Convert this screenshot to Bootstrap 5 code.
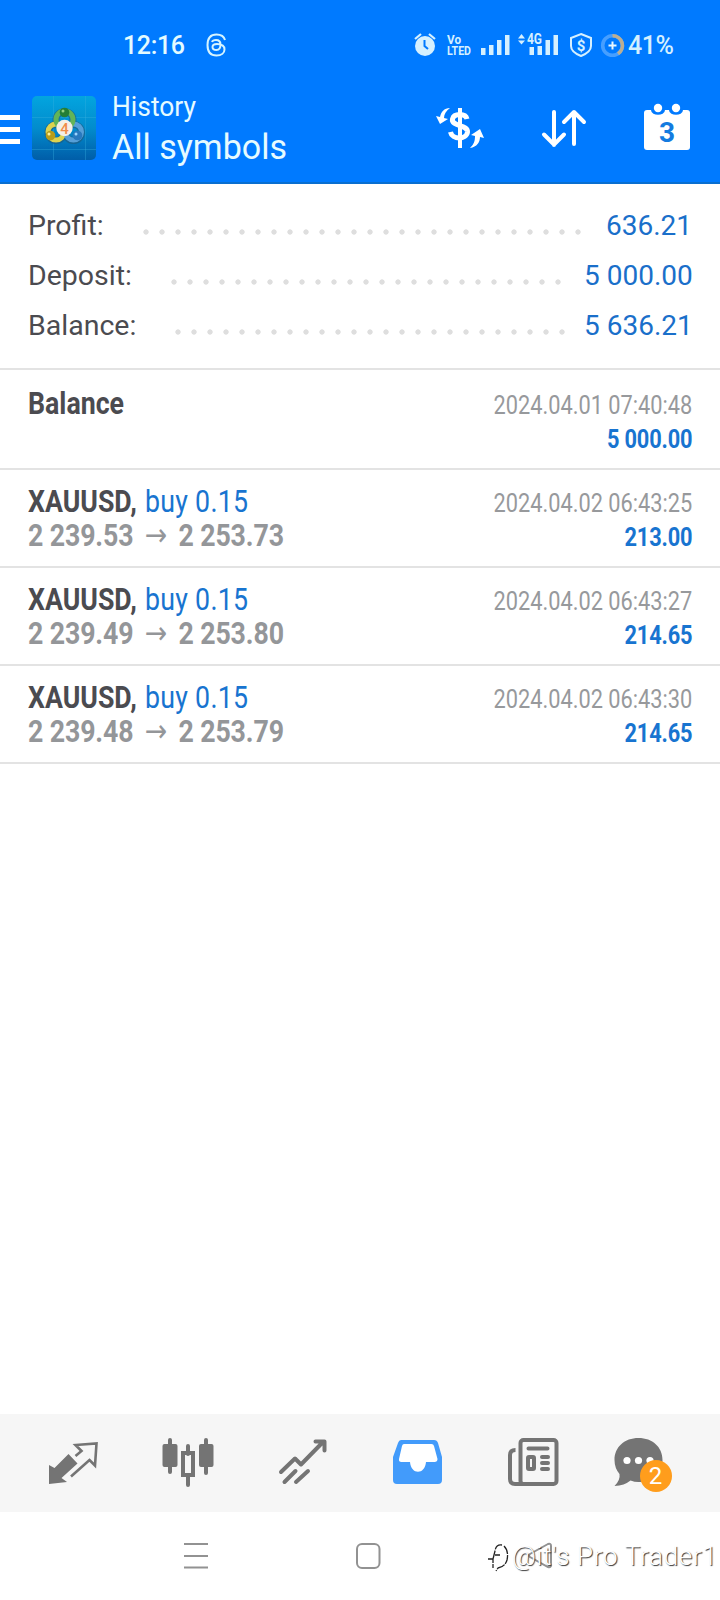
<!DOCTYPE html>
<html lang="en">
<head>
<meta charset="utf-8">
<meta name="viewport" content="width=device-width, initial-scale=1">
<title>History</title>
<link href="https://cdn.jsdelivr.net/npm/bootstrap@5.3.0/dist/css/bootstrap.min.css" rel="stylesheet">
<style>
body{font-family:Roboto,sans-serif;background:#fff;color:#4b4b50;width:720px;height:1600px;overflow:hidden}
svg{display:block;flex:none}
svg text{font-family:Roboto,sans-serif}
.topbar{background:#007aff;height:184px;border-bottom:2px solid #0a6fd0}
.statusbar,.titlebar{height:91px}
.summary{height:186px;border-bottom:2px solid #e3e3e3;padding:17px 28px 0;font-size:28.500px;white-space:nowrap}
.summary .line{height:50px;line-height:50px}
.summary .val{width:108px;text-align:right;color:#1a6fca;font-size:28px}
.dots{height:16px;margin-top:11px;background:radial-gradient(circle at 8px 8px,#dedede 2.3px,transparent 3px) 0 0/16px 16px}
.line:nth-child(1) .dots{width:448px;margin-right:-2px}
.line:nth-child(2) .dots{width:400px;margin-right:18px}
.line:nth-child(3) .dots{width:400px;margin-right:14px}
.deal{border-bottom:2px solid #e3e3e3;height:98px;padding:14px 28px 0;line-height:34px;white-space:pre}
.deal:first-child{height:100px;padding-top:16px}
.sym{font-size:32px;transform:scaleX(.835);transform-origin:0 0}
.sym b{font-weight:700}
.sym .blue{letter-spacing:.3px;margin-left:2px}
.price{color:#949699;font-weight:700;letter-spacing:-.15px}
.arrow{display:inline-block;width:54px;text-align:center;font:400 32px/20px "DejaVu Sans",sans-serif}
.when{font-size:26px;color:#97999c;transform:scaleX(.838);transform-origin:100% 0;padding-top:2px;text-align:right}
.when .blue{letter-spacing:-.2px}
.blue{color:#1874d0}
.tabs{height:98px;background:#f6f6f6;padding:0 14.500px 0 15.500px}
.tabs svg{width:115px;height:98px}
.count{left:49px;top:46px;width:32px;height:32px;background:#ff9d1c;font-size:24px;line-height:32px}
.sysnav{height:88px}
.wm{left:487px;top:26px;color:#fff;font-weight:300;font-size:26px;line-height:36px;letter-spacing:.7px;text-shadow:1px 1px 1px #333;white-space:pre}
</style>
</head>
<body class="d-flex flex-column">
<header class="topbar flex-shrink-0">
<div class="statusbar d-flex">
<svg width="400" height="91" viewBox="0 0 400 91"><text x="123" y="54" font-size="25" font-weight="500" textLength="62" fill="#e4fbff">12:16</text>
<path d="M225 40c-1-3.500-4-5.500-8.500-5.500-6 0-9 4-9 10.500s3 10.500 9 10.500c5 0 8-2.500 8-6 0-4-3-5.500-7.500-5.500-3.500 0-4.500 1.500-4.500 3 0 2 1.500 3 4 3 3 0 4-2 4-5.500 0-3-1.500-4.500-4.500-4.500-2 0-3.500.7-4 2" fill="none" stroke="#d5f4ff" stroke-width="2"/></svg>
<svg width="320" height="91" viewBox="400 0 320 91" fill="#d5f0ff">
<circle cx="425" cy="46" r="10"/><path d="M415 39l6-5M435 39l-6-5" stroke="#d5f0ff" stroke-width="2.200"/><path d="M424.500 40v6l3.500 3" fill="none" stroke="#007aff" stroke-width="2"/>
<g font-weight="700"><text x="447" y="43.500" font-size="12" textLength="14" lengthAdjust="spacingAndGlyphs">Vo</text><text x="447" y="55" font-size="13" textLength="24" lengthAdjust="spacingAndGlyphs">LTED</text></g>
<path d="M481 48h4.500v7H481zM489 45h4.500v10H489zM497 40h4.500v15H497zM505 35h4.500v20H505zM529.500 47h4.500v8h-4.500zM537.500 46h4.500v9h-4.500zM545.500 40h4.500v15h-4.500zM553.500 35h4.500v20h-4.500zM518 38.500l3.500-4.500 3.500 4.500zM518 40.500h7l-3.500 4z"/><text x="527" y="44" font-size="14" font-weight="700" textLength="15" lengthAdjust="spacingAndGlyphs">4G</text>
<path d="M581 34l10 4v8c0 5-5 8-10 10-5-2-10-5-10-10v-8z" fill="none" stroke="#d5f0ff" stroke-width="2"/><text x="581" y="50.500" font-size="15" font-weight="700" text-anchor="middle">$</text>
<circle cx="612.500" cy="45.500" r="9.800" fill="none" stroke="#479fff" stroke-width="3.600"/><path d="M612.500 35.700a9.800 9.800 0 0 1 5.500 18" fill="none" stroke="#bcae92" stroke-width="3.600"/><path d="M608.500 45.500h8M612.500 41.500v8" stroke="#e8f6ff" stroke-width="2"/>
<text x="628" y="54" font-size="25" font-weight="500" textLength="46">41%</text></svg>
</div>
<div class="titlebar d-flex">
<svg width="28" height="91" viewBox="0 91 28 91" fill="#fff"><path d="M0 115h20v5H0zM0 127h20v5H0zM0 139h20v5H0z"/></svg>
<svg width="72" height="91" viewBox="28 91 72 91">
<defs><linearGradient id="tile" x2="0" y2="1"><stop stop-color="#03a5df"/><stop offset=".5" stop-color="#028ccd"/><stop offset="1" stop-color="#005da8"/></linearGradient></defs>
<rect x="32" y="96" width="64" height="64" rx="5" fill="url(#tile)"/>
<path d="M53.500 96v64M85.500 96v64M32 117.500h64M32 149.500h64" stroke="#39b3e0" stroke-opacity=".35"/>
<g fill="none"><g stroke="#23597a" stroke-width="7" opacity=".6"><circle cx="64.500" cy="120" r="8.500"/><circle cx="56" cy="132.500" r="8"/><circle cx="73.500" cy="132.500" r="8"/></g><g stroke-width="5"><circle cx="56" cy="132" r="8" stroke="#ddd34f"/><circle cx="73.500" cy="132" r="8" stroke="#559fd8"/><circle cx="64.500" cy="119.500" r="8.500" stroke="#62b458"/></g></g>
<circle cx="64.500" cy="112.500" r="4.800" fill="#237e37"/><circle cx="50.500" cy="135.500" r="4.800" fill="#b79c1a"/><circle cx="77.500" cy="135.500" r="4.800" fill="#2879be"/><circle cx="64.500" cy="128" r="8.200" fill="#f5efe6"/>
<circle cx="63" cy="111" r="1.500" fill="#93d083"/><circle cx="49" cy="134" r="1.500" fill="#fff29b"/><circle cx="76" cy="134" r="1.500" fill="#9bd5ff"/>
<text x="64.500" y="133.500" font-size="15" font-weight="500" fill="#f08c4a" text-anchor="middle">4</text></svg>
<svg width="320" height="91" viewBox="100 91 320 91" fill="#e6fbff"><text x="112" y="115.500" font-size="27" textLength="84" lengthAdjust="spacingAndGlyphs">History</text><text x="112" y="159" font-size="35" textLength="175" lengthAdjust="spacingAndGlyphs">All symbols</text></svg>
<svg width="300" height="91" viewBox="420 91 300 91" fill="#fff">
<path d="M467 119c-1.500-6-13-6-14.500 0-1.500 8 15.500 5 15 13-1 8-15.500 8-17 0" fill="none" stroke="#fff" stroke-width="5"/><path d="M460 108v40" stroke="#fff" stroke-width="4"/>
<path d="M450 108c-6 0-9 4-10 9l-4-1 4 8 8-5-4-1c0-4 2-7 6-10zM470 148c7-1 10-6 10-11l4 1-4-9-9 6 4 1c0 5-1 8-5 12z"/>
<path d="M554 112v33M544 134.500l10 10 10-10M574 144v-32M564 122l10-10 10 10" fill="none" stroke="#fff" stroke-width="4" stroke-linecap="round" stroke-linejoin="round"/>
<rect x="644" y="110" width="46" height="40" rx="3"/><g stroke="#007aff" stroke-width="2"><path d="M652 110c0 5 12 5 12 0M670 110c0 5 12 5 12 0" fill="#007aff"/></g><circle cx="658" cy="108" r="4.200"/><circle cx="676" cy="108" r="4.200"/><text x="667" y="141.500" text-anchor="middle" font-size="28" font-weight="700" fill="#147be0">3</text></svg>
</div>
</header>
<section class="summary flex-shrink-0">
<div class="line d-flex align-items-center justify-content-between"><span class="flex-grow-1">Profit:</span><span class="dots"></span><span class="val">636.21</span></div>
<div class="line d-flex align-items-center justify-content-between"><span class="flex-grow-1">Deposit:</span><span class="dots"></span><span class="val">5 000.00</span></div>
<div class="line d-flex align-items-center justify-content-between"><span class="flex-grow-1">Balance:</span><span class="dots"></span><span class="val">5 636.21</span></div>
</section>
<main class="flex-grow-1">
<div class="deal d-flex justify-content-between"><div class="sym"><b>Balance</b></div><div class="when"><div>2024.04.01 07:40:48</div><b class="blue">5 000.00</b></div></div>
<div class="deal d-flex justify-content-between"><div class="sym"><div><b>XAUUSD,</b> <span class="blue">buy 0.15</span></div><div class="price">2 239.53<span class="arrow">→</span>2 253.73</div></div><div class="when"><div>2024.04.02 06:43:25</div><b class="blue">213.00</b></div></div>
<div class="deal d-flex justify-content-between"><div class="sym"><div><b>XAUUSD,</b> <span class="blue">buy 0.15</span></div><div class="price">2 239.49<span class="arrow">→</span>2 253.80</div></div><div class="when"><div>2024.04.02 06:43:27</div><b class="blue">214.65</b></div></div>
<div class="deal d-flex justify-content-between"><div class="sym"><div><b>XAUUSD,</b> <span class="blue">buy 0.15</span></div><div class="price">2 239.48<span class="arrow">→</span>2 253.79</div></div><div class="when"><div>2024.04.02 06:43:30</div><b class="blue">214.65</b></div></div>
</main>
<nav class="tabs d-flex flex-shrink-0">
<svg viewBox="16.500 1414 115 98"><path d="M49.500 1465v19l18-2-5.500-4 16-14.500-9-9.500-14 14z" fill="#747474"/><path d="M76 1456l6-5-6-6 21-1.500-1.500 22-5.500-5.500-18.500 16.500" fill="none" stroke="#747474" stroke-width="2.600"/></svg>
<svg viewBox="131.500 1414 115 98" fill="#747474"><rect x="163" y="1444" width="15" height="23" rx="2"/><rect x="199.500" y="1444" width="14.500" height="23" rx="2"/><path d="M170.500 1440v32M206.500 1440v33M188.500 1446v8M188.500 1476v9" stroke="#747474" stroke-width="4" stroke-linecap="round"/><rect x="183.500" y="1453" width="10" height="22" fill="none" stroke="#747474" stroke-width="4"/></svg>
<svg viewBox="246.500 1414 115 98"><path d="M281.500 1472l14-13.500 6 6 22.500-23M316 1441.500h9v9M285 1482l11-11M296.500 1482l12-11" fill="none" stroke="#747474" stroke-width="4" stroke-linecap="round" stroke-linejoin="round"/></svg>
<svg viewBox="361.500 1414 115 98"><path d="M402 1440h33q3 0 4 3l4 14v23q0 4-4 4h-41q-4 0-4-4v-23l5-14q1-3 3-3z" transform="translate(-.5)" fill="#429bfb"/><path d="M404.500 1444h27.500q2 0 2.500 2l3.500 13q0 3-3 3h-8.500c-1 13-15 13-16 0H402q-3 0-2.500-3l3-13q.5-2 2-2z" fill="#fff"/></svg>
<svg viewBox="476.500 1414 115 98" fill="none" stroke="#747474" stroke-width="4"><rect x="521" y="1440" width="36" height="44" rx="3"/><path d="M516 1450q-5.500 0-5.500 5v24q0 5 5 5h8"/><path d="M529 1448.500h19M542.500 1457h6M542.500 1463h6M542.500 1469h6" stroke-linecap="round"/><rect x="528.500" y="1457" width="6" height="12" rx="1"/></svg>
<div class="position-relative"><svg viewBox="591.500 1414 115 98"><path d="M639 1438c14 0 24 9 24 22s-10 22-24 22q-4 0-8-1.500-6 5-16 5.500 6-6 5-12-5-6-5-14c0-13 10-22 24-22z" fill="#747474"/><g fill="#fff"><circle cx="627.500" cy="1460.500" r="3.600"/><circle cx="639" cy="1460.500" r="3.600"/><circle cx="650.500" cy="1460.500" r="3.600"/></g></svg><span class="count position-absolute rounded-circle text-white text-center">2</span></div>
</nav>
<footer class="sysnav flex-shrink-0 position-relative">
<svg width="720" height="88" viewBox="0 1515 720 88" fill="none" stroke="#929292" stroke-width="2"><path d="M184 1547h24M184 1559h24M184 1570.500h24"/><rect x="357" y="1547" width="22.500" height="24" rx="5"/><path d="M548 1547l-18 10q-2 1.500 0 3l18 10q3 1 3-2v-19q0-3-3-2z"/></svg>
<div class="wm position-absolute d-flex"><svg width="25" height="36" viewBox="487 1541 25 36" fill="none" stroke="#222" stroke-width="1.300"><path d="M502 1548q-6-1-7 6l-2 8M488 1562h5v9M495 1558h5M504 1549q5 5 3 14-2 7-9 8l-2 3" stroke-dasharray="9 1"/></svg><span>@it's Pro Trader1</span></div>
</footer>
</body>
</html>
